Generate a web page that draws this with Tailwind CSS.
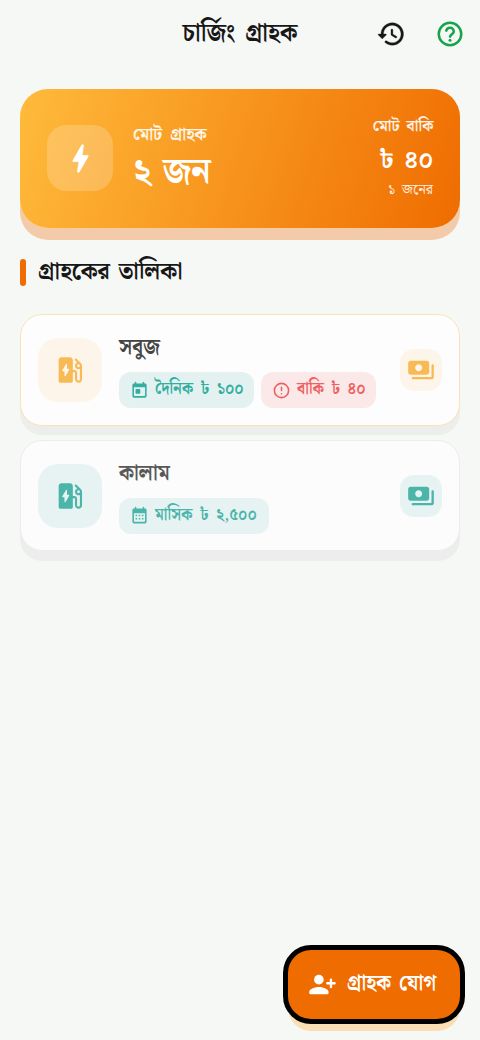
<!DOCTYPE html>
<html lang="bn">
<head>
<meta charset="utf-8">
<meta name="viewport" content="width=device-width, initial-scale=1">
<title>চার্জিং গ্রাহক</title>
<script src="https://cdn.jsdelivr.net/npm/@tailwindcss/browser@4"></script>
</head>
<body class="bg-[#f6f8f6] font-['Noto_Serif_Bengali','Noto_Sans_Bengali','Noto_Sans',serif] text-[#171717]">
<svg class="hidden">
  <symbol id="station" viewBox="0 0 24 24"><path fill-rule="evenodd" d="M19.77 7.23l.01-.01-3.19-3.19c-.29-.29-.77-.29-1.06 0s-.29.77 0 1.06l1.58 1.58c-1.05.4-1.76 1.47-1.58 2.71.15 1.1 1.1 2 2.2 2.11.47.05.88-.03 1.27-.2v7.21c0 .55-.45 1-1 1s-1-.45-1-1V14c0-1.1-.9-2-2-2h-1V5c0-1.1-.9-2-2-2H6c-1.1 0-2 .9-2 2v15c0 .55.45 1 1 1h8c.55 0 1-.45 1-1v-6.5h1.5v4.86c0 1.31.94 2.5 2.24 2.63 1.5.15 2.76-1.02 2.76-2.49V9c0-.69-.28-1.32-.73-1.77zM18 10c-.55 0-1-.45-1-1s.45-1 1-1 1 .45 1 1-.45 1-1 1zM8.1 16v-3.2H7c-.4 0-.6-.4-.4-.7l2.5-4.2c.2-.4.8-.3.8.2v3.1h1.1c.4 0 .6.4.4.7L8.9 16.2c-.2.4-.8.3-.8-.2z"/></symbol>
  <symbol id="cash" viewBox="0 0 24 24"><path fill-rule="evenodd" d="M19 14V6c0-1.100-.9-2-2-2H3c-1.100 0-2 .9-2 2v8c0 1.100.9 2 2 2h14c1.100 0 2-.9 2-2zM10 13c-1.660 0-3-1.340-3-3s1.340-3 3-3 3 1.340 3 3-1.340 3-3 3zM23 8v10c0 1.100-.9 2-2 2H5c-.55 0-1-.45-1-1s.45-1 1-1h16V8c0-.55.45-1 1-1s1 .45 1 1z"/></symbol>
</svg>
<div class="relative flex h-[1040px] w-[480px] flex-col overflow-hidden">
  <header class="grid h-[68px] grid-cols-[160px_160px_160px] items-center">
    <span></span>
    <h1 class="scale-x-94 whitespace-nowrap text-center text-[25px] leading-[32px] font-bold [word-spacing:4px]">চার্জিং গ্রাহক</h1>
    <div class="flex items-center justify-end gap-[29px] pr-[15px]">
      <svg class="size-[30px]" viewBox="0 0 24 24" fill="currentColor" stroke="currentColor" stroke-width=".25"><path d="M13.26 3C8.17 2.86 4 6.95 4 12H2.210c-.45 0-.67.54-.35.85l2.790 2.800c.2.2.51.2.71 0l2.790-2.800c.31-.31.09-.85-.36-.85H6c0-3.900 3.180-7.050 7.100-7 3.720.05 6.850 3.180 6.900 6.900.05 3.910-3.100 7.100-7 7.100-1.610 0-3.100-.55-4.280-1.480-.4-.31-.96-.28-1.320.08-.42.42-.39 1.130.08 1.490C9 20.290 10.910 21 13 21c5.050 0 9.140-4.170 9-9.260-.13-4.690-4.050-8.610-8.740-8.740zm-.51 5c-.41 0-.75.34-.75.75v3.680c0 .35.19.68.49.86l3.120 1.850c.36.21.82.09 1.030-.26.21-.36.09-.82-.26-1.030l-2.880-1.710V8.740c0-.4-.34-.74-.75-.74z"/></svg>
      <svg class="size-[30px] text-[#16a34a]" viewBox="0 0 24 24" fill="none" stroke="currentColor" stroke-width="2" stroke-linecap="round"><circle cx="12" cy="12" r="9"/><path d="M9 9.300C9.400 7.700 10.600 7 12 7c1.700 0 3 1.300 3 3 0 2-2.600 2.200-3 4.100"/><circle cx="12" cy="17" r="1.200" fill="currentColor" stroke="none"/></svg>
    </div>
  </header>

  <section class="mx-5 mt-[20.5px] flex h-[139px] shrink-0 items-center rounded-[28px] bg-[linear-gradient(107.4deg,#ffbb3b,#ef6c00)] px-[27px] text-white shadow-[0_12px_0_#f4cba9]">
    <div class="flex size-[66px] items-center justify-center rounded-[20px] bg-white/20">
      <svg class="size-[37px]" viewBox="0 0 24 24" fill="currentColor" stroke="currentColor" stroke-width=".5" stroke-linejoin="round"><path d="M10.670 21c-.35 0-.62-.31-.57-.66L11 14H7.500c-.88 0-.33-.75-.31-.78 1.260-2.230 3.150-5.530 5.650-9.930.1-.18.3-.29.5-.29.35 0 .62.31.57.66L13.010 10h3.510c.4 0 .62.19.4.66-3.290 5.740-5.200 9.090-5.750 10.050-.1.18-.29.29-.5.29z"/></svg>
    </div>
    <div class="ml-5 flex-1 whitespace-nowrap">
      <p class="mt-2 origin-left scale-x-96 text-[17px] leading-[22px] font-bold text-white/90 [word-spacing:4px]">মোট গ্রাহক</p>
      <p class="origin-left scale-x-93 text-[37px] leading-[54px] font-bold [word-spacing:3px]">২ জন</p>
    </div>
    <div class="text-right whitespace-nowrap">
      <p class="origin-right scale-x-94 text-[16px] leading-[22px] font-bold text-white/90 [word-spacing:3px]">মোট বাকি</p>
      <p class="origin-right scale-x-94 pt-1 text-[26px] leading-[38px] font-bold [word-spacing:4px]">৳ ৪০</p>
      <p class="text-[14px] leading-[21px] text-white/90 [word-spacing:3px]">১ জনের</p>
    </div>
  </section>

  <div class="mt-[31.5px] ml-5 flex h-[27px] shrink-0 items-center gap-3">
    <i class="h-[27px] w-[6px] rounded-full bg-[#ef6c00]"></i>
    <h2 class="-mt-0.5 origin-left scale-x-93 text-[24.500px] leading-[32px] font-bold whitespace-nowrap [word-spacing:3px]">গ্রাহকের তালিকা</h2>
  </div>

  <main class="mx-5 mt-[28px] flex flex-col gap-[14px]">
    <article class="flex h-[112px] items-center rounded-[22px] border-[1.500px] border-[#fae2b8] bg-[#fdfdfd] px-[17px] shadow-[0_9px_0_#eceeeb]">
      <div class="flex size-16 shrink-0 items-center justify-center rounded-[20px] bg-[#fdf5e9] text-[#f8ba55]"><svg class="size-[34px]" fill="currentColor"><use href="#station"/></svg></div>
      <div class="ml-[17px] flex-1 whitespace-nowrap">
        <h3 class="origin-left scale-x-92 text-[22px] leading-[32px] font-bold text-[#454545]">সবুজ</h3>
        <div class="mt-[8px] flex gap-[7px] text-[17px] font-bold [word-spacing:3.500px]">
          <div class="flex h-9 w-[135px] items-center gap-[6px] rounded-[12px] bg-[#e3f2f1] pl-[11px] text-[#35aea2]">
            <svg class="size-[19px] shrink-0" viewBox="0 0 24 24" fill="currentColor"><path fill-rule="evenodd" d="M19 3h-1V2c0-.55-.45-1-1-1s-1 .45-1 1v1H8V2c0-.55-.45-1-1-1s-1 .45-1 1v1H5c-1.100 0-2 .9-2 2v14c0 1.100.9 2 2 2h14c1.100 0 2-.9 2-2V5c0-1.100-.9-2-2-2zm-1 16H6c-.55 0-1-.45-1-1V8h14v10c0 .55-.45 1-1 1z"/><rect x="7" y="10" width="6" height="6" rx="1"/></svg>
            <span class="origin-left scale-x-89">দৈনিক ৳ ১০০</span>
          </div>
          <div class="flex h-9 w-[115px] items-center gap-[6px] rounded-[12px] bg-[#fbe9e9] pl-[11px] text-[#ed6260]">
            <svg class="size-[19px] shrink-0" viewBox="0 0 24 24" fill="none" stroke="currentColor" stroke-width="2" stroke-linecap="round"><circle cx="12" cy="12" r="9"/><path d="M12 8v4M12 16v0"/></svg>
            <span class="origin-left scale-x-89">বাকি ৳ ৪০</span>
          </div>
        </div>
      </div>
      <div class="flex size-[42px] shrink-0 items-center justify-center rounded-[14px] bg-[#fdf5e9] text-[#f8ba55]"><svg class="size-7" fill="currentColor"><use href="#cash"/></svg></div>
    </article>

    <article class="flex h-[111px] items-center rounded-[22px] border-[1.500px] border-[#ebedeb] bg-[#fcfcfc] px-[17px] shadow-[0_10px_0_#ededed]">
      <div class="flex size-16 shrink-0 items-center justify-center rounded-[20px] bg-[#e6f3f2] text-[#4bb5aa]"><svg class="size-[34px]" fill="currentColor"><use href="#station"/></svg></div>
      <div class="ml-[17px] flex-1 whitespace-nowrap">
        <h3 class="origin-left scale-x-92 text-[22px] leading-[32px] font-bold text-[#585858]">কালাম</h3>
        <div class="mt-[8px] flex text-[17px] font-bold [word-spacing:3.500px]">
          <div class="flex h-9 w-[150px] items-center gap-[6px] rounded-[12px] bg-[#e6f3f2] pl-[11px] text-[#4bb5aa]">
            <svg class="size-[19px] shrink-0" viewBox="0 0 24 24" fill="currentColor"><path fill-rule="evenodd" d="M19 3h-1V2c0-.55-.45-1-1-1s-1 .45-1 1v1H8V2c0-.55-.45-1-1-1s-1 .45-1 1v1H5c-1.100 0-2 .9-2 2v15c0 1.100.9 2 2 2h14c1.100 0 2-.9 2-2V5c0-1.100-.9-2-2-2zm-1 17H6c-.55 0-1-.45-1-1V9h14v10c0 .55-.45 1-1 1z"/><path d="M7 11h2v2H7zm4 0h2v2h-2zm4 0h2v2h-2zm-8 4h2v2H7zm4 0h2v2h-2zm4 0h2v2h-2z"/></svg>
            <span class="origin-left scale-x-89">মাসিক ৳ ২,৫০০</span>
          </div>
        </div>
      </div>
      <div class="flex size-[42px] shrink-0 items-center justify-center rounded-[14px] bg-[#e6f3f2] text-[#4bb5aa]"><svg class="size-7" fill="currentColor"><use href="#cash"/></svg></div>
    </article>
  </main>

  <button class="absolute right-[15px] bottom-4 flex h-[79px] w-[182px] items-center gap-[10px] rounded-[28px] border-[5px] border-black bg-[#ef6c00] pl-[20px] whitespace-nowrap text-white shadow-[0_12px_0_-5px_#fadfb5]">
    <svg class="size-[29px] shrink-0" viewBox="0 0 24 24" fill="currentColor"><circle cx="9" cy="8" r="4"/><path d="M9 14c-2.670 0-8 1.340-8 4v1c0 .55.45 1 1 1h14c.55 0 1-.45 1-1v-1c0-2.660-5.330-4-8-4z"/><path d="M19 8v6M16 11h6" fill="none" stroke="currentColor" stroke-width="2" stroke-linecap="round"/></svg>
    <span class="-mt-0.5 origin-left scale-x-92 text-[21.500px] leading-[32px] font-bold [word-spacing:3px]">গ্রাহক যোগ</span>
  </button>
</div>
</body>
</html>
